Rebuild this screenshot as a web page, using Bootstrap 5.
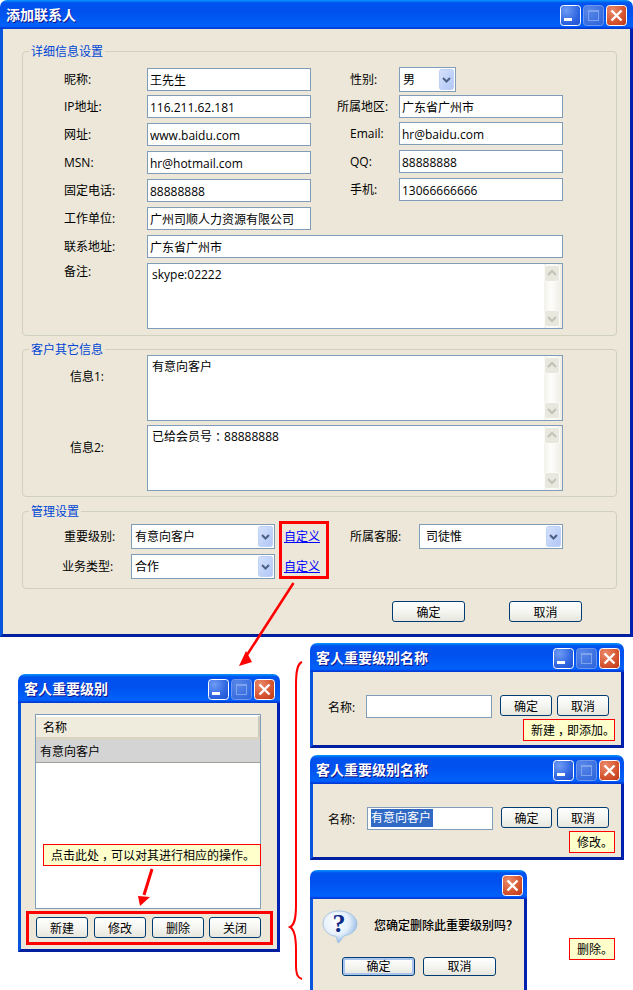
<!DOCTYPE html>
<html lang="zh-CN">
<head>
<meta charset="utf-8">
<title>添加联系人</title>
<link rel="stylesheet" href="https://cdn.jsdelivr.net/npm/bootstrap@5.3.0/dist/css/bootstrap.min.css">
<style>
html,body{margin:0;background:#fff}
body{font:12px/14px "Open Sans","Noto Sans CJK SC",sans-serif;color:#000}
.svg-defs{position:absolute;width:0;height:0}
.xp-desk{position:relative;width:633px;height:990px;overflow:hidden;background:#fff}
.xp-win{position:absolute;display:flex;flex-direction:column;border-radius:7px 7px 0 0;overflow:hidden}
.w-main{left:0;top:0;width:633px;height:637px}
.w-level{left:18px;top:674px;width:262px;height:278px}
.w-new{left:310px;top:643px;width:314px;height:105px}
.w-edit{left:310px;top:755px;width:314px;height:105px}
.w-del{left:310px;top:870px;width:217px;height:125px}
.cap{flex:0 0 29px;height:29px;display:flex;align-items:center;padding:0 4px 0 6px;color:#fff;font-weight:700;font-size:14px;text-shadow:1px 1px 0 #0f1089;
 background:linear-gradient(180deg,#0997ff 0,#0053ee 10%,#0050ee 40%,#0060f8 85%,#005bff 92%,#003dd7 96%,#003dd7 100%)}
.w-main .cap{padding-right:6px}
.w-level .cap{padding-right:5px}
.cap-btns{display:flex;gap:2px;margin-left:auto;margin-top:2px}
.cap-btns svg{display:block;width:21px;height:21px}
.client{flex:1 1 auto;min-height:0;background:#ece7d8;border:solid #0855dd;border-width:0 3px 3px;border-right-color:#0020b0;border-bottom-color:#001ea0}
.w-main .client{padding:16px 13px 0 19px}
.fs{margin:0;padding:0;min-width:0;border:1px solid #d0d0bf;border-radius:4px}
.fs+.fs{margin-top:7px}
.fs.fs-last{margin-top:8px}
.fs legend{float:none;width:auto;margin:0 0 0 6px;padding:0 2px;font-size:12px;line-height:13px;color:#0046d5}
.fs-a{padding:9px 0 6px 41px}
.fs-b{margin-top:-1px;padding:0 0 5px 47px}
.fs-c{padding:6px 0 9px 41px}
.lbl{flex:0 0 auto;display:block;margin:0;padding-top:1px}
.l83{width:83px}.l77{width:77px}.l67{width:67px}.l69{width:69px}.l62{width:62px}.l38{width:38px}.l39{width:39px}
.pl13{padding-left:13px}
.nudge{margin-left:-2px;width:69px}
.top2{padding-top:2px}.top15{padding-top:15px}.top16{padding-top:16px}
.col-left{width:247px;margin-right:26px;padding-top:1px}
.rw{display:flex;align-items:center}
.rw-g5{margin-top:5px}.rw-g4{margin-top:4px}.rw-g3{margin-top:3px}
.rw-top{align-items:flex-start}
.fi.form-control{height:23px;min-height:0;padding:1px 2px 0;border:1px solid #7f9db9;border-radius:0;font-size:12px;line-height:20px;color:#000;box-shadow:none;background:#fff}
.w164{width:164px}.w416{width:416px}.w126{width:126px}
.fs-sel.form-select{height:25px;padding:1px 18px 0 3px;border:1px solid #7f9db9;border-radius:0;font-size:12px;line-height:22px;color:#000;box-shadow:none;
 background:#fff url("data:image/svg+xml,%3Csvg xmlns='http://www.w3.org/2000/svg' width='15' height='21'%3E%3Cdefs%3E%3ClinearGradient id='g' x1='0' y1='0' x2='1' y2='1'%3E%3Cstop offset='0' stop-color='%23d6e2fd'/%3E%3Cstop offset='1' stop-color='%23b0c6f6'/%3E%3C/linearGradient%3E%3C/defs%3E%3Crect x='.5' y='.5' width='14' height='20' rx='2' fill='url(%23g)' stroke='%23bfd0f5'/%3E%3Cpath d='M4 9l3.5 3.5L11 9' fill='none' stroke='%234d6185' stroke-width='2'/%3E%3C/svg%3E") no-repeat right 1px center/15px 21px}
.w57{width:57px}.w144{width:144px}
.px7.form-select{padding-left:6px}
.tx{display:flex;border:1px solid #7f9db9;background:#fff;overflow:hidden}
.h66{width:416px;height:66px}
.tx textarea{flex:1 1 auto;min-width:0;border:0;outline:0;resize:none;overflow:hidden;padding:4px 4px;font-size:12px;line-height:14px;color:#000;background:#fff;border-radius:0}
.tx-text{flex:1 1 auto;padding:4px;white-space:pre}
.pct{margin-left:3px;letter-spacing:-3px}
.sb{flex:0 0 18px;display:flex;flex-direction:column;justify-content:space-between;padding:1px 1px 1px 0;background:linear-gradient(90deg,#f3f2ec,#fdfdfb 40%,#eeede5)}
.sb svg{display:block;width:16px;height:17px}
.lnk{display:block;width:36px;margin-left:9px;margin-right:30px;padding-top:1px;color:#00f;text-decoration:underline}
.btn.xp-btn{display:block;padding:1px 0 0;height:21px;font-size:12px;line-height:17px;color:#000;border:1px solid #003c74;border-radius:3px;background:linear-gradient(180deg,#fff,#f3f3ee 60%,#e6e6dd);box-shadow:none}
.b73{width:73px}.b52{width:52px}.b51{width:51px}
.foot{display:flex;justify-content:flex-end;gap:44px;margin-top:12px;padding-right:35px}
.h19.btn.xp-btn{height:19px;padding-top:0;line-height:16px}
.btn.xp-def{box-shadow:inset 0 0 0 2px #a9c4ee}
.lv{margin:11px 16px 0 14px;height:195px;border:1px solid #7f9db9;background:#fff;padding:1px 0 0;border-radius:0}
.lv .list-group-item{border:0;padding:0;border-radius:0;font-size:12px;color:#000}
.lv .lv-h{height:24px;line-height:23px;padding-left:7px;background:#efebdd;box-shadow:inset 0 -3px 0 #d8d3c2,inset -2px 0 0 #cfcabb,inset 0 1px 0 #fff}
.lv .lv-r{height:23px;line-height:23px;padding-left:4px;background:#d4d4d4;border-bottom:1px solid #a0a096;margin-top:0}
.btns4{display:flex;gap:6px;margin:8px 0 0 15px}
.btns4 .last{margin-left:-1px}
.frm{display:flex;align-items:flex-start;padding:23px 0 0 15px}
.frm .lbl{line-height:23px;padding-top:1px}
.mx8{margin-left:8px}.mx5{margin-left:5px}
.sel-text{background:#316ac5;color:#fff;display:block;width:62px;height:18px;line-height:17px;margin:0 0 0 1px}
.msg{display:flex;align-items:flex-start;padding:11px 0 0 9px}
.msg svg{flex:0 0 auto;width:36px;height:34px}
.msg-t{margin:9px 0 0 16px;white-space:nowrap;font-weight:500}
.btns2{display:flex;gap:8px;margin:13px 0 0 29px}
.note{position:absolute;height:22px;line-height:20px;padding:1px 0 0 7px;background:#ffc;border:1px solid #f00;white-space:nowrap}
.n1{left:43px;top:844px;width:218px}
.n2{left:523px;top:719px;width:92px}
.n3{left:569px;top:831px;width:46px}
.n4{left:569px;top:938px;width:46px}
.redbox{position:absolute;border:3px solid #f00}
.r1{left:279px;top:521px;width:50px;height:58px}
.r2{left:26px;top:911px;width:247px;height:34px}
.over{position:absolute;left:0;top:0;width:633px;height:990px;pointer-events:none}
</style>
</head>
<body>
<svg class="svg-defs" aria-hidden="true">
 <defs>
  <radialGradient id="gMin" cx=".3" cy=".25" r="1"><stop offset="0" stop-color="#6f9bf5"/><stop offset=".6" stop-color="#2f66e0"/><stop offset="1" stop-color="#1f4fd0"/></radialGradient>
  <radialGradient id="gMax" cx=".3" cy=".25" r="1"><stop offset="0" stop-color="#5a88e8"/><stop offset="1" stop-color="#2a62dc"/></radialGradient>
  <radialGradient id="gCls" cx=".3" cy=".25" r="1"><stop offset="0" stop-color="#eb8a6a"/><stop offset=".6" stop-color="#d5532e"/><stop offset="1" stop-color="#b9381a"/></radialGradient>
  <radialGradient id="gQ" cx=".38" cy=".35" r=".72"><stop offset="0" stop-color="#fff"/><stop offset=".55" stop-color="#e4effa"/><stop offset="1" stop-color="#7fabdc"/></radialGradient>
  <symbol id="i-min" viewBox="0 0 21 21"><rect x=".5" y=".5" width="20" height="20" rx="3" fill="url(#gMin)" stroke="#fff"/><rect x="4" y="13" width="8" height="3" fill="#fff"/></symbol>
  <symbol id="i-max" viewBox="0 0 21 21"><rect x=".5" y=".5" width="20" height="20" rx="3" fill="url(#gMax)" stroke="#6f97ec"/><rect x="5.5" y="5.5" width="10" height="10" fill="none" stroke="#7ea3ee"/><rect x="5" y="5" width="11" height="2" fill="#7ea3ee"/></symbol>
  <symbol id="i-cls" viewBox="0 0 21 21"><rect x=".5" y=".5" width="20" height="20" rx="3" fill="url(#gCls)" stroke="#fff"/><path d="M5.5 5.5l10 10M15.500 5.500l-10 10" stroke="#fff" stroke-width="2.400" fill="none"/></symbol>
  <symbol id="i-up" viewBox="0 0 16 17"><rect x=".5" y=".5" width="15" height="16" rx="2" fill="#e9e8df" stroke="#fbfbf8"/><path d="M4 10l4-4 4 4" fill="none" stroke="#c2c2b8" stroke-width="2"/></symbol>
  <symbol id="i-dn" viewBox="0 0 16 17"><rect x=".5" y=".5" width="15" height="16" rx="2" fill="#e9e8df" stroke="#fbfbf8"/><path d="M4 7l4 4 4-4" fill="none" stroke="#c2c2b8" stroke-width="2"/></symbol>
 </defs>
</svg>

<div class="xp-desk">

 <!-- main window -->
 <div class="xp-win w-main">
  <div class="cap"><span>添加联系人</span><div class="cap-btns"><svg><use href="#i-min"/></svg><svg><use href="#i-max"/></svg><svg><use href="#i-cls"/></svg></div></div>
  <div class="client">
   <fieldset class="fs">
    <legend>详细信息设置</legend>
    <div class="fs-a">
     <div class="d-flex">
      <div class="col-left">
       <div class="rw"><label class="lbl l83">昵称:</label><input class="fi form-control w164" value="王先生"></div>
       <div class="rw rw-g4"><label class="lbl l83">IP地址:</label><input class="fi form-control w164" value="116.211.62.181"></div>
       <div class="rw rw-g5"><label class="lbl l83">网址:</label><input class="fi form-control w164" value="www.baidu.com"></div>
       <div class="rw rw-g5"><label class="lbl l83">MSN:</label><input class="fi form-control w164" value="hr@hotmail.com"></div>
       <div class="rw rw-g5"><label class="lbl l83">固定电话:</label><input class="fi form-control w164" value="88888888"></div>
       <div class="rw rw-g5"><label class="lbl l83">工作单位:</label><input class="fi form-control w164" value="广州司顺人力资源有限公司"></div>
      </div>
      <div>
       <div class="rw"><label class="lbl l62 pl13">性别:</label><select class="fs-sel form-select w57"><option>男</option><option>女</option></select></div>
       <div class="rw rw-g3"><label class="lbl l62">所属地区:</label><input class="fi form-control w164" value="广东省广州市"></div>
       <div class="rw rw-g4"><label class="lbl l62 pl13">Email:</label><input class="fi form-control w164" value="hr@baidu.com"></div>
       <div class="rw rw-g5"><label class="lbl l62 pl13">QQ:</label><input class="fi form-control w164" value="88888888"></div>
       <div class="rw rw-g5"><label class="lbl l62 pl13">手机:</label><input class="fi form-control w164" value="13066666666"></div>
      </div>
     </div>
     <div class="rw rw-g5"><label class="lbl l83">联系地址:</label><input class="fi form-control w416" value="广东省广州市"></div>
     <div class="rw rw-top rw-g5"><label class="lbl l83 top2">备注:</label>
      <div class="tx h66"><textarea>skype:02222</textarea><div class="sb"><svg><use href="#i-up"/></svg><svg><use href="#i-dn"/></svg></div></div>
     </div>
    </div>
   </fieldset>

   <fieldset class="fs">
    <legend>客户其它信息</legend>
    <div class="fs-b">
     <div class="rw rw-top"><label class="lbl l77 top15">信息1:</label>
      <div class="tx h66"><textarea>有意向客户</textarea><div class="sb"><svg><use href="#i-up"/></svg><svg><use href="#i-dn"/></svg></div></div>
     </div>
     <div class="rw rw-top rw-g4"><label class="lbl l77 top16">信息2:</label>
      <div class="tx h66"><div class="tx-text">已给会员号<span class="pct">：</span>88888888</div><div class="sb"><svg><use href="#i-up"/></svg><svg><use href="#i-dn"/></svg></div></div>
     </div>
    </div>
   </fieldset>

   <fieldset class="fs fs-last">
    <legend>管理设置</legend>
    <div class="fs-c">
     <div class="rw"><label class="lbl l67">重要级别:</label><select class="fs-sel form-select w144"><option>有意向客户</option></select><a href="#" class="lnk">自定义</a><label class="lbl l69">所属客服:</label><select class="fs-sel form-select w144 px7"><option>司徒惟</option></select></div>
     <div class="rw rw-g5"><label class="lbl nudge">业务类型:</label><select class="fs-sel form-select w144"><option>合作</option></select><a href="#" class="lnk">自定义</a></div>
    </div>
   </fieldset>

   <div class="foot"><button type="button" class="btn xp-btn b73">确定</button><button type="button" class="btn xp-btn b73">取消</button></div>
  </div>
 </div>

 <!-- level list -->
 <div class="xp-win w-level">
  <div class="cap"><span>客人重要级别</span><div class="cap-btns"><svg><use href="#i-min"/></svg><svg><use href="#i-max"/></svg><svg><use href="#i-cls"/></svg></div></div>
  <div class="client">
   <div class="list-group lv">
    <div class="list-group-item lv-h">名称</div>
    <div class="list-group-item lv-r">有意向客户</div>
   </div>
   <div class="btns4">
    <button type="button" class="btn xp-btn b52">新建</button>
    <button type="button" class="btn xp-btn b52">修改</button>
    <button type="button" class="btn xp-btn b52">删除</button>
    <button type="button" class="btn xp-btn b52 last">关闭</button>
   </div>
  </div>
 </div>

 <!-- new -->
 <div class="xp-win w-new">
  <div class="cap"><span>客人重要级别名称</span><div class="cap-btns"><svg><use href="#i-min"/></svg><svg><use href="#i-max"/></svg><svg><use href="#i-cls"/></svg></div></div>
  <div class="client">
   <div class="frm"><label class="lbl l38">名称:</label><input class="fi form-control w126"><button type="button" class="btn xp-btn b52 mx8">确定</button><button type="button" class="btn xp-btn b52 mx5">取消</button></div>
  </div>
 </div>

 <!-- edit -->
 <div class="xp-win w-edit">
  <div class="cap"><span>客人重要级别名称</span><div class="cap-btns"><svg><use href="#i-min"/></svg><svg><use href="#i-max"/></svg><svg><use href="#i-cls"/></svg></div></div>
  <div class="client">
   <div class="frm"><label class="lbl l39">名称:</label><div class="fi form-control w126"><span class="sel-text">有意向客户</span></div><button type="button" class="btn xp-btn b51 mx8">确定</button><button type="button" class="btn xp-btn b52 mx5">取消</button></div>
  </div>
 </div>

 <!-- confirm -->
 <div class="xp-win w-del">
  <div class="cap"><span></span><div class="cap-btns"><svg><use href="#i-cls"/></svg></div></div>
  <div class="client">
   <div class="msg">
    <svg viewBox="0 0 36 34">
     <path d="M17 1C8 1 1 6 1 13.500S8 26 14 26.200L16 33l1-.5c2-2 3.500-5 5-6.600 7-1 13-5.500 13-12.400S27 1 17 1z" fill="url(#gQ)" stroke="#a7c4e4"/>
     <text x="17" y="22" text-anchor="middle" font-family="Liberation Serif,serif" font-weight="700" font-size="26" fill="#0b2a86">?</text>
    </svg>
    <div class="msg-t">您确定删除此重要级别吗？</div>
   </div>
   <div class="btns2"><button type="button" class="btn xp-btn xp-def b73 h19">确定</button><button type="button" class="btn xp-btn b73 h19">取消</button></div>
  </div>
 </div>

 <!-- annotations -->
 <div class="redbox r1"></div>
 <div class="redbox r2"></div>
 <div class="note n1">点击此处<span class="pct">，</span>可以对其进行相应的操作。</div>
 <div class="note n2">新建<span class="pct">，</span>即添加。</div>
 <div class="note n3">修改。</div>
 <div class="note n4">删除。</div>
 <svg class="over" viewBox="0 0 633 990">
  <path d="M293.500 583L245 658" stroke="#f00" stroke-width="2.500" fill="none"/>
  <path d="M239 666l7-15 6 11z" fill="#f00"/>
  <path d="M152 869L144 895" stroke="#f00" stroke-width="3" fill="none"/>
  <path d="M140 906l-2-10 12 1z" fill="#f00"/>
  <path d="M302 662C297 664 296 672 296 685L296 905C296 920 294 925 290 927C294 929 296 935 296 950L296 965C296 975 298 978 302 979" stroke="#f00" stroke-width="2" fill="none"/>
 </svg>
</div>
<script src="https://cdn.jsdelivr.net/npm/bootstrap@5.3.0/dist/js/bootstrap.bundle.min.js"></script>
</body>
</html>
